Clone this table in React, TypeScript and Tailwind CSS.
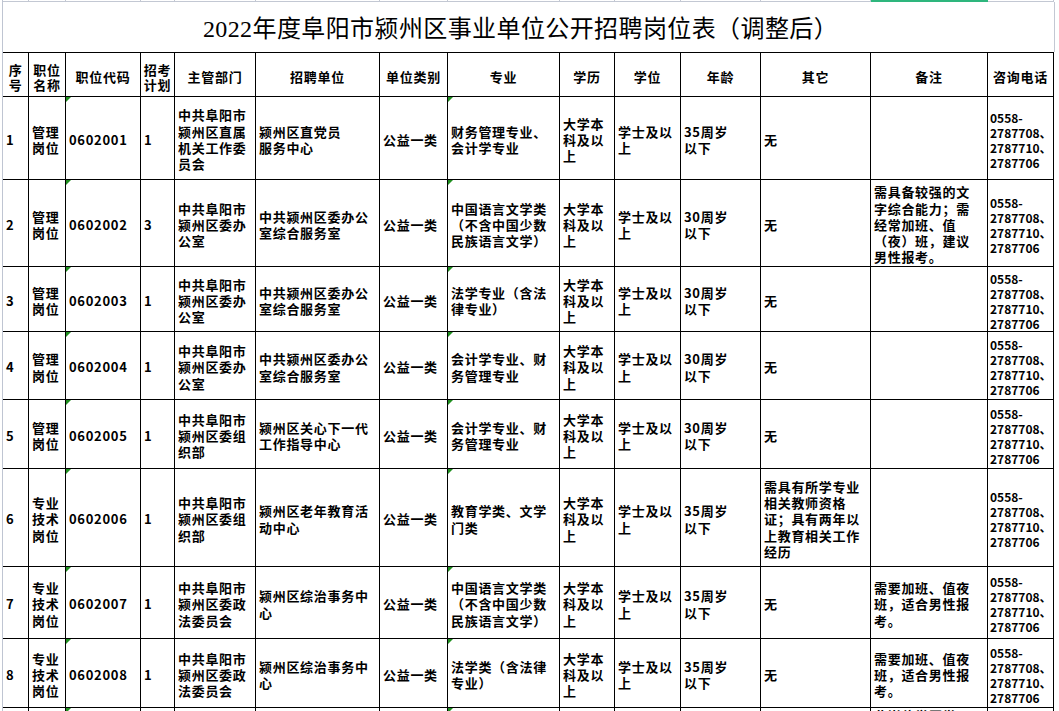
import React from "react";

const COLS =
  "grid grid-cols-[26px_37px_75px_34px_81px_124px_68px_112px_55px_66px_80px_110px_117px_66px]";

const PHONE = ["0558-", "2787708、", "2787710、", "2787706"];

type Row = {
  h: string;
  cells: string[][];
};

const rows: Row[] = [
  {
    h: "h-[83px]",
    cells: [
      ["1"],
      ["管理", "岗位"],
      ["0602001"],
      ["1"],
      ["中共阜阳市", "颍州区直属", "机关工作委", "员会"],
      ["颍州区直党员", "服务中心"],
      ["公益一类"],
      ["财务管理专业、", "会计学专业"],
      ["大学本", "科及以", "上"],
      ["学士及以", "上"],
      ["35周岁", "以下"],
      ["无"],
      [],
    ],
  },
  {
    h: "h-[87px]",
    cells: [
      ["2"],
      ["管理", "岗位"],
      ["0602002"],
      ["3"],
      ["中共阜阳市", "颍州区委办", "公室"],
      ["中共颍州区委办公", "室综合服务室"],
      ["公益一类"],
      ["中国语言文学类", "（不含中国少数", "民族语言文学）"],
      ["大学本", "科及以", "上"],
      ["学士及以", "上"],
      ["30周岁", "以下"],
      ["无"],
      ["需具备较强的文", "字综合能力；需", "经常加班、值", "（夜）班，建议", "男性报考。"],
    ],
  },
  {
    h: "h-[65px]",
    cells: [
      ["3"],
      ["管理", "岗位"],
      ["0602003"],
      ["1"],
      ["中共阜阳市", "颍州区委办", "公室"],
      ["中共颍州区委办公", "室综合服务室"],
      ["公益一类"],
      ["法学专业（含法", "律专业）"],
      ["大学本", "科及以", "上"],
      ["学士及以", "上"],
      ["30周岁", "以下"],
      ["无"],
      [],
    ],
  },
  {
    h: "h-[68px]",
    cells: [
      ["4"],
      ["管理", "岗位"],
      ["0602004"],
      ["1"],
      ["中共阜阳市", "颍州区委办", "公室"],
      ["中共颍州区委办公", "室综合服务室"],
      ["公益一类"],
      ["会计学专业、财", "务管理专业"],
      ["大学本", "科及以", "上"],
      ["学士及以", "上"],
      ["30周岁", "以下"],
      ["无"],
      [],
    ],
  },
  {
    h: "h-[69px]",
    cells: [
      ["5"],
      ["管理", "岗位"],
      ["0602005"],
      ["1"],
      ["中共阜阳市", "颍州区委组", "织部"],
      ["颍州区关心下一代", "工作指导中心"],
      ["公益一类"],
      ["会计学专业、财", "务管理专业"],
      ["大学本", "科及以", "上"],
      ["学士及以", "上"],
      ["30周岁", "以下"],
      ["无"],
      [],
    ],
  },
  {
    h: "h-[98px]",
    cells: [
      ["6"],
      ["专业", "技术", "岗位"],
      ["0602006"],
      ["1"],
      ["中共阜阳市", "颍州区委组", "织部"],
      ["颍州区老年教育活", "动中心"],
      ["公益一类"],
      ["教育学类、文学", "门类"],
      ["大学本", "科及以", "上"],
      ["学士及以", "上"],
      ["35周岁", "以下"],
      ["需具有所学专业", "相关教师资格", "证；具有两年以", "上教育相关工作", "经历"],
      [],
    ],
  },
  {
    h: "h-[72px]",
    cells: [
      ["7"],
      ["专业", "技术", "岗位"],
      ["0602007"],
      ["1"],
      ["中共阜阳市", "颍州区委政", "法委员会"],
      ["颍州区综治事务中", "心"],
      ["公益一类"],
      ["中国语言文学类", "（不含中国少数", "民族语言文学）"],
      ["大学本", "科及以", "上"],
      ["学士及以", "上"],
      ["35周岁", "以下"],
      ["无"],
      ["需要加班、值夜", "班，适合男性报", "考。"],
    ],
  },
  {
    h: "h-[69px]",
    cells: [
      ["8"],
      ["专业", "技术", "岗位"],
      ["0602008"],
      ["1"],
      ["中共阜阳市", "颍州区委政", "法委员会"],
      ["颍州区综治事务中", "心"],
      ["公益一类"],
      ["法学类（含法律", "专业）"],
      ["大学本", "科及以", "上"],
      ["学士及以", "上"],
      ["35周岁", "以下"],
      ["无"],
      ["需要加班、值夜", "班，适合男性报", "考。"],
    ],
  },
];

const headers: string[][] = [
  ["序", "号"],
  ["职位", "名称"],
  ["职位代码"],
  ["招考", "计划"],
  ["主管部门"],
  ["招聘单位"],
  ["单位类别"],
  ["专业"],
  ["学历"],
  ["学位"],
  ["年龄"],
  ["其它"],
  ["备注"],
  ["咨询电话"],
];

function Tri() {
  return (
    <div className="absolute left-0 top-0 h-0 w-0 border-t-[5px] border-r-[5px] border-t-[#1f8f1f] border-r-transparent" />
  );
}

function Cell({
  lines,
  tri,
  phone,
}: {
  lines: string[];
  tri?: boolean;
  phone?: boolean;
}) {
  return (
    <div
      className={
        phone
          ? "relative flex flex-col justify-center border-r border-b border-black pl-[2px] pt-[3px] text-[12px] leading-[15px] tracking-normal"
          : "relative flex flex-col justify-center border-r border-b border-black pl-[3px] pt-[4px] text-[13px] leading-[16.3px] tracking-[0.7px]"
      }
    >
      {tri && <Tri />}
      {lines.map((l, i) => (
        <div key={i} className="whitespace-nowrap">
          {l}
        </div>
      ))}
    </div>
  );
}

export default function App() {
  return (
    <div
      className="h-[711px] w-[1059px] overflow-hidden bg-white pl-[2px] text-black"
      style={{ fontFamily: '"Noto Sans CJK SC", "Noto Sans", sans-serif' }}
    >
      <div className="h-full w-[1053px] border-l border-[#bfc5d2]">
        {/* top strip of previous spreadsheet row */}
        <div className={`${COLS} h-[2px]`}>
          {headers.map((_, i) =>
            i === 12 ? (
              <div key={i} className="bg-[#2eb67d]" />
            ) : (
              <div key={i} className="border-r border-b border-[#c3c8d3]" />
            )
          )}
        </div>
        {/* title */}
        <div className="flex h-[50px] w-[1052px] items-center justify-center border-r border-[#c3c8d3] pr-[16px] pt-[4px]">
          <div
            className="whitespace-nowrap text-[24px] font-normal tracking-[0.4px]"
            style={{ fontFamily: '"Liberation Serif", "Noto Sans CJK SC", serif' }}
          >
            2022年度阜阳市颍州区事业单位公开招聘岗位表（调整后）
          </div>
        </div>
        {/* table */}
        <div className="w-[1051px] border-t border-black font-bold">
          <div className={`${COLS} h-[44px]`}>
            {headers.map((h, i) => (
              <div
                key={i}
                className="flex flex-col items-center justify-center border-r border-b border-black pt-[4px] text-[13px] leading-[15px] tracking-[0.7px]"
              >
                {h.map((l, j) => (
                  <div key={j} className="whitespace-nowrap">
                    {l}
                  </div>
                ))}
              </div>
            ))}
          </div>
          {rows.map((r, ri) => (
            <div key={ri} className={`${COLS} ${r.h}`}>
              {r.cells.map((c, ci) => (
                <Cell key={ci} lines={c} tri={ci === 2 || ci === 7} />
              ))}
              <Cell lines={PHONE} phone />
            </div>
          ))}
          {/* partially visible next row */}
          <div className={`${COLS} h-[120px]`}>
            {headers.map((_, ci) => (
              <div
                key={ci}
                className="relative border-r border-b border-black pl-[3px] text-[13px] leading-[16.3px] tracking-[0.7px]"
              >
                {(ci === 2 || ci === 7) && <Tri />}
                {ci === 12 && <div className="whitespace-nowrap">此岗位学历学</div>}
              </div>
            ))}
          </div>
        </div>
      </div>
    </div>
  );
}
